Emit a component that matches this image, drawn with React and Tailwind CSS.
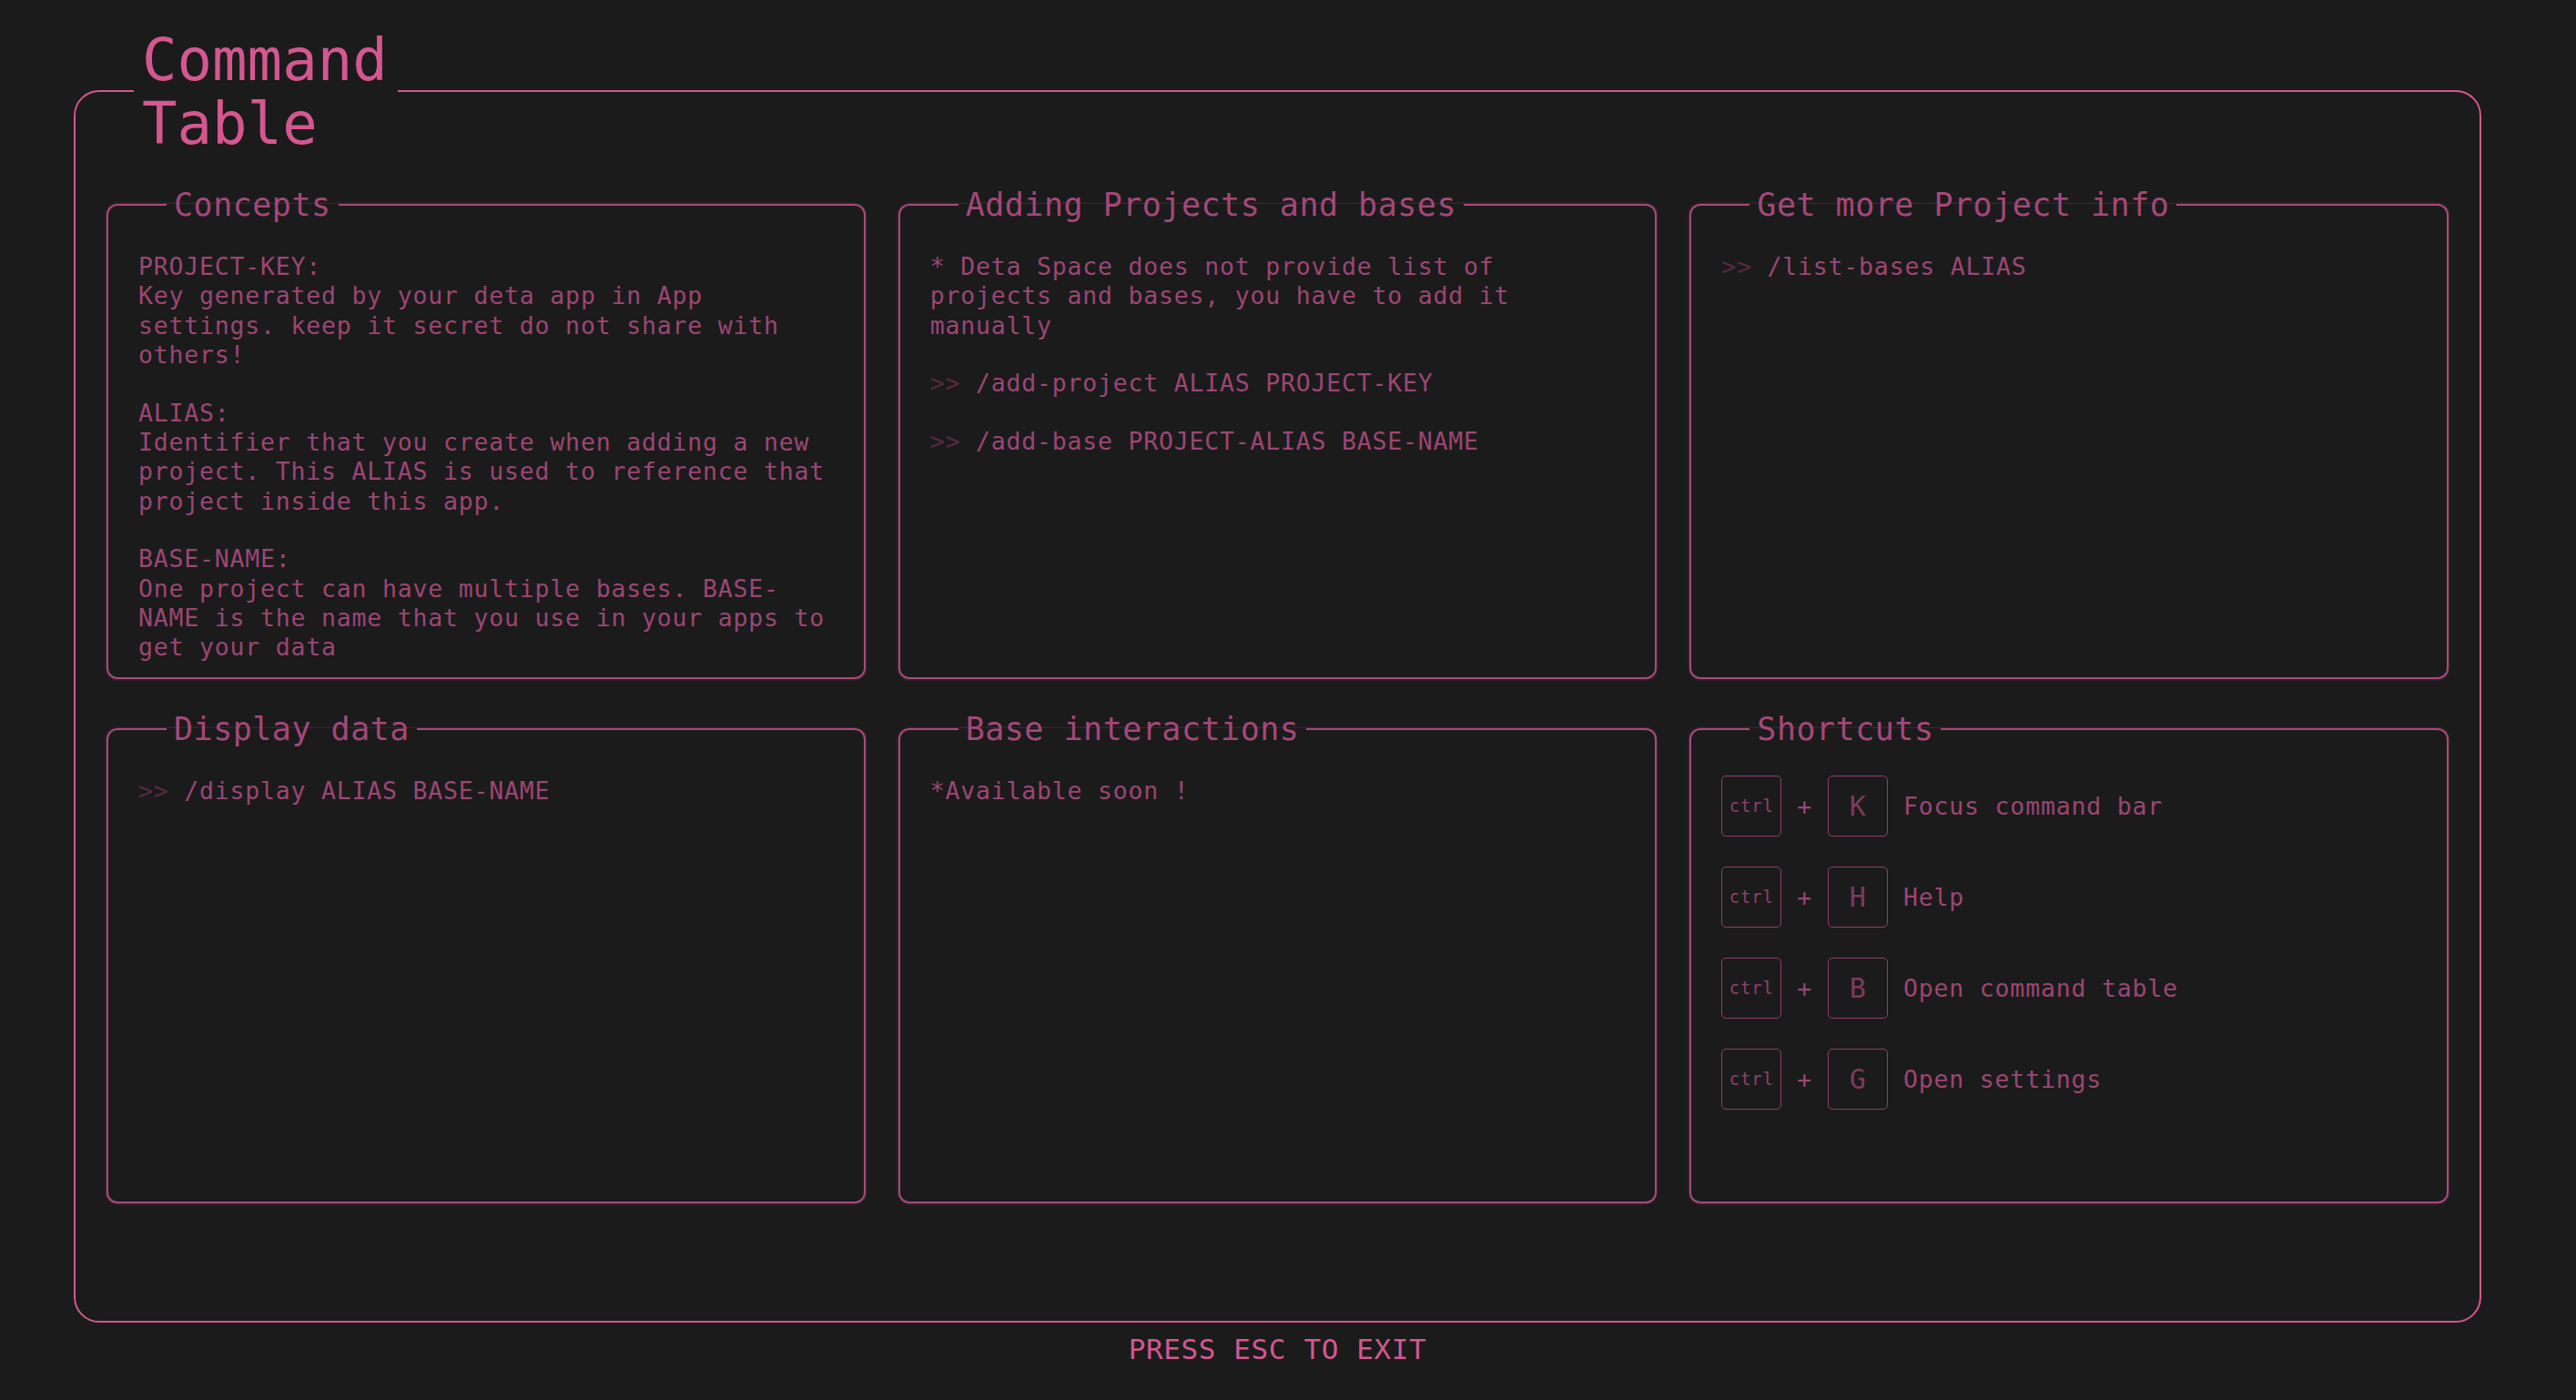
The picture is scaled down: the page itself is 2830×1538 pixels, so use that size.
import React from 'react'

// Panel with a title cut into its top border (fieldset + legend)
const Panel = ({ title, children }) => (
  <fieldset className="h-[542px] min-w-0 rounded-[12px] border-2 border-[#a8497c] pt-[31px] pl-[33px] pr-[33px] pb-[33px] shadow-[0_0_3px_rgba(163,72,122,0.6)]">
    <legend className="ml-[31px] px-[8px] text-[35px] leading-[42px] tracking-[0.5px] text-[#a3487a]">
      {title}
    </legend>
    {children}
  </fieldset>
)

const Body = ({ children }) => (
  <div className="flex flex-col gap-[31px] text-[26.5px] leading-[32.4px] tracking-[0.8px] text-[#9b4674]">
    {children}
  </div>
)

const Cmd = ({ children }) => (
  <div>
    <span className="text-[#57283f]">&gt;&gt; </span>
    {children}
  </div>
)

const shortcuts = [
  { key: 'K', label: 'Focus command bar' },
  { key: 'H', label: 'Help' },
  { key: 'B', label: 'Open command table' },
  { key: 'G', label: 'Open settings' },
]

const Key = ({ children, small }) => (
  <div
    className={`flex h-[67px] w-[66px] shrink-0 items-center justify-center rounded-[5px] border-[1.5px] border-[#8e4068] ${
      small ? 'text-[19px] text-[#8e4068]' : 'text-[30px] text-[#7d3a5d]'
    }`}
  >
    {children}
  </div>
)

export default function App() {
  return (
    <div className="min-h-screen w-full bg-[#1b1b1b] pt-[28px] pl-[81px] font-['DejaVu_Sans_Mono',monospace]">
      <fieldset className="h-[1425px] w-[2645px] rounded-[28px] border-2 border-[#d4578f] px-[34px] pt-[33px]">
        <legend className="ml-[30px] w-[290px] pl-[9px] pr-[4px] pt-[3px] text-[64px] leading-[70px] text-[#d4578f]">
          Command Table
        </legend>

        <div className="grid grid-cols-3 gap-x-[36px] gap-y-[34px]">
          <Panel title="Concepts">
            <Body>
              <div>
                PROJECT-KEY:
                <br />
                Key generated by your deta app in App settings. keep it secret do not share with others!
              </div>
              <div>
                ALIAS:
                <br />
                Identifier that you create when adding a new project. This ALIAS is used to reference that project inside this app.
              </div>
              <div>
                BASE-NAME:
                <br />
                One project can have multiple bases. BASE-NAME is the name that you use in your apps to get your data
              </div>
            </Body>
          </Panel>

          <Panel title="Adding Projects and bases">
            <Body>
              <div>* Deta Space does not provide list of projects and bases, you have to add it manually</div>
              <Cmd>/add-project ALIAS PROJECT-KEY</Cmd>
              <Cmd>/add-base PROJECT-ALIAS BASE-NAME</Cmd>
            </Body>
          </Panel>

          <Panel title="Get more Project info">
            <Body>
              <Cmd>/list-bases ALIAS</Cmd>
            </Body>
          </Panel>

          <Panel title="Display data">
            <Body>
              <Cmd>/display ALIAS BASE-NAME</Cmd>
            </Body>
          </Panel>

          <Panel title="Base interactions">
            <Body>
              <div>*Available soon !</div>
            </Body>
          </Panel>

          <Panel title="Shortcuts">
            <div className="-mt-[1px] flex flex-col gap-[33px] text-[26.5px] tracking-[0.8px] text-[#9b4674]">
              {shortcuts.map((s) => (
                <div key={s.key} className="flex items-center">
                  <Key small>ctrl</Key>
                  <span className="mx-[17px]">+</span>
                  <Key>{s.key}</Key>
                  <span className="ml-[17px]">{s.label}</span>
                </div>
              ))}
            </div>
          </Panel>
        </div>
      </fieldset>

      <div className="mt-[10px] w-[2645px] text-center text-[31px] leading-[38px] tracking-[0.6px] text-[#d4578f]">
        PRESS ESC TO EXIT
      </div>
    </div>
  )
}
